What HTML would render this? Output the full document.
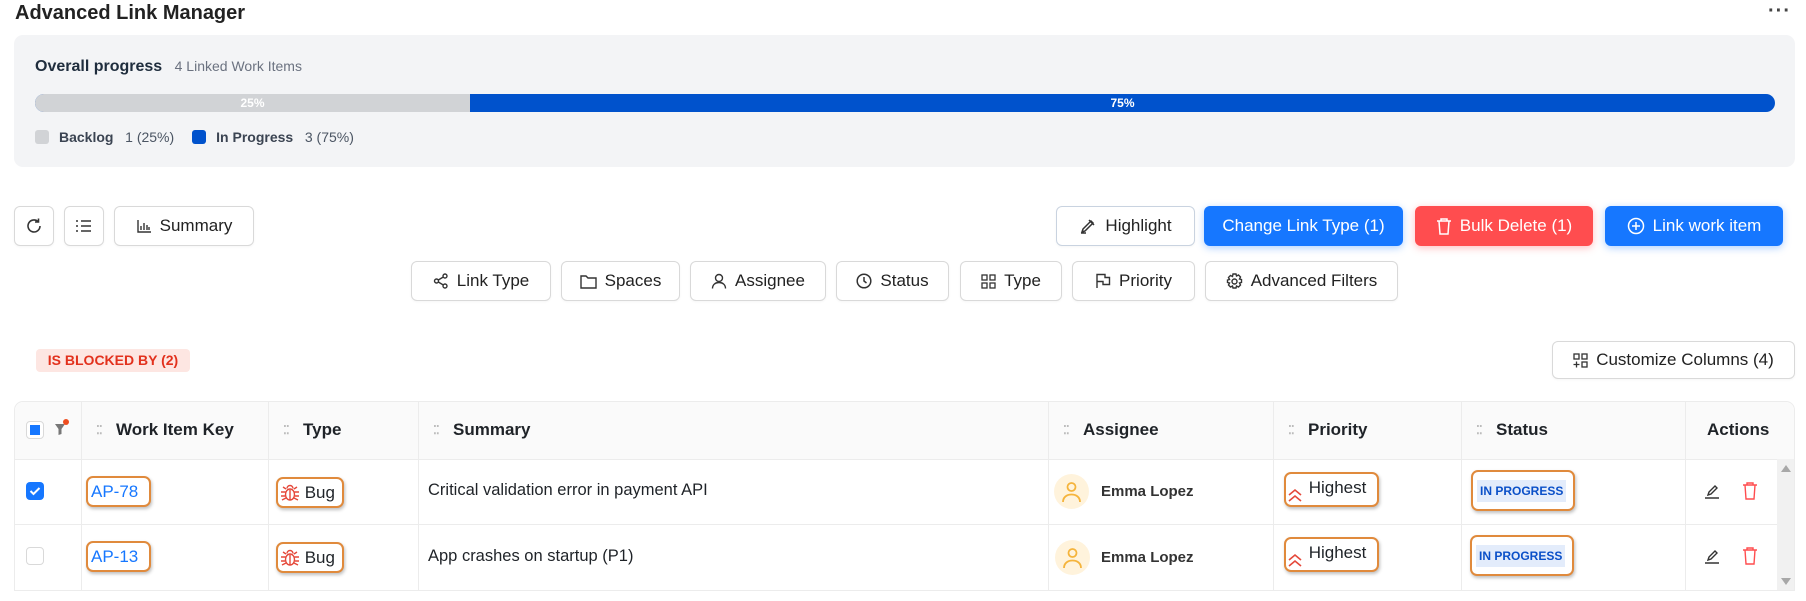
<!DOCTYPE html>
<html><head><meta charset="utf-8"><style>
*{box-sizing:border-box;margin:0;padding:0}
body{width:1806px;height:601px;overflow:hidden;background:#fff;font-family:"Liberation Sans",sans-serif;color:#1f2328;position:relative}
.a{position:absolute}
.btn{position:absolute;display:flex;align-items:center;justify-content:center;gap:8px;border:1px solid #d9d9d9;border-radius:6px;background:#fff;font-size:17px;color:#222;box-shadow:0 1px 2px rgba(0,0,0,.04);white-space:nowrap}
.pb{background:#1677ff;color:#fff;border:none;box-shadow:0 2px 8px rgba(22,119,255,.35)}
.rb{background:#ff4d4f;color:#fff;border:none;box-shadow:0 2px 8px rgba(255,77,79,.35)}
.th{position:absolute;top:401px;height:58px;display:flex;align-items:center;font-weight:bold;font-size:17px;color:#1f2328}
.dots{color:#bbb;font-size:12px;letter-spacing:-1px;margin-right:12px;line-height:6px;width:8px}
.vl{position:absolute;width:1px;background:#ececec}
.hl{position:absolute;height:1px;background:#ececec}
.ob{position:absolute;border:2px solid #e08a3c;border-radius:7px;box-shadow:1px 2px 3px rgba(0,0,0,.25);display:flex;align-items:center;background:#fff;white-space:nowrap}
.ip{background:#e3ecfb;color:#0b50c8;font-weight:bold;font-size:12px;padding:4px 3px;white-space:nowrap}
svg{display:block}
</style></head><body>
<div class="a" style="left:15px;top:2px;font-size:20px;font-weight:bold;color:#222">Advanced Link Manager</div>
<div class="a" style="left:1768px;top:0px;font-size:20px;font-weight:bold;color:#444;letter-spacing:1px">···</div>

<div class="a" style="left:14px;top:35px;width:1781px;height:132px;background:#f3f4f6;border-radius:9px"></div>
<div class="a" style="left:35px;top:58px;font-size:16px;color:#1f2d3d;font-weight:bold">Overall progress <span style="font-weight:normal;color:#6b7280;font-size:14px;margin-left:8px">4 Linked Work Items</span></div>
<div class="a" style="left:35px;top:94px;width:1740px;height:18px;border-radius:9px;background:#0052cc;overflow:hidden">
 <div style="width:435px;height:18px;background:#d1d3d6;color:#fff;font-size:12px;font-weight:bold;text-align:center;line-height:18px">25%</div>
 <div style="position:absolute;left:435px;top:0;width:1305px;text-align:center;color:#fff;font-size:12px;font-weight:bold;line-height:18px">75%</div>
</div>
<div class="a" style="left:35px;top:129px;display:flex;align-items:center;font-size:14px;color:#4b5563">
 <span style="width:14px;height:14px;background:#d1d3d6;border-radius:3px;margin-right:10px"></span><b style="color:#3b4452">Backlog</b>&nbsp;&nbsp; 1 (25%)
 <span style="width:14px;height:14px;background:#0052cc;border-radius:3px;margin:0 10px 0 18px"></span><b style="color:#3b4452">In Progress</b>&nbsp;&nbsp; 3 (75%)
</div>

<div class="btn" style="left:14px;top:206px;width:40px;height:40px"><svg width="18" height="18" viewBox="0 0 18 18" fill="none" stroke="#333" stroke-width="1.6"><path d="M15 9a6 6 0 1 1-2-4.5"/><path d="M13.5 1.5v3.5h-3.5"/></svg></div>
<div class="btn" style="left:64px;top:206px;width:40px;height:40px"><svg width="18" height="18" viewBox="0 0 18 18" stroke="#333" stroke-width="1.5"><path d="M6 4h10M6 9h10M6 14h10M2 3v2M2 8v2M2 13v2"/></svg></div>
<div class="btn" style="left:114px;top:206px;width:140px;height:40px"><svg width="16" height="16" viewBox="0 0 16 16" fill="none" stroke="#333" stroke-width="1.4"><path d="M2 2v12h13M5 12V8M8 12V5M11 12V7M13 12V9"/></svg>Summary</div>

<div class="btn" style="left:1056px;top:206px;width:139px;height:40px;border-color:#c9d3e0"><svg width="18" height="18" viewBox="0 0 18 18" fill="none" stroke="#333" stroke-width="1.5"><path d="M3 15l3-1 8-8-2-2-8 8zM10 3l5 5M2 16h5"/></svg>Highlight</div>
<div class="btn pb" style="left:1204px;top:206px;width:199px;height:40px">Change Link Type (1)</div>
<div class="btn rb" style="left:1415px;top:206px;width:178px;height:40px"><svg width="16" height="18" viewBox="0 0 16 18" fill="none" stroke="#fff" stroke-width="1.5"><path d="M1 4h14M5 4V2h6v2M3 4l1 13h8l1-13"/></svg>Bulk Delete (1)</div>
<div class="btn pb" style="left:1605px;top:206px;width:178px;height:40px"><svg width="18" height="18" viewBox="0 0 18 18" fill="none" stroke="#fff" stroke-width="1.5"><circle cx="9" cy="9" r="7.5"/><path d="M9 5v8M5 9h8"/></svg>Link work item</div>

<div class="btn" style="left:411px;top:261px;width:140px;height:40px"><svg width="16" height="16" viewBox="0 0 16 16" fill="none" stroke="#333" stroke-width="1.4"><circle cx="3.5" cy="8" r="2"/><circle cx="12" cy="3" r="2"/><circle cx="12" cy="13" r="2"/><path d="M5.3 7l5-3M5.3 9l5 3"/></svg>Link Type</div>
<div class="btn" style="left:561px;top:261px;width:119px;height:40px"><svg width="17" height="15" viewBox="0 0 17 15" fill="none" stroke="#333" stroke-width="1.4"><path d="M1 2h5l2 2h8v10H1z"/></svg>Spaces</div>
<div class="btn" style="left:690px;top:261px;width:136px;height:40px"><svg width="16" height="16" viewBox="0 0 16 16" fill="none" stroke="#333" stroke-width="1.4"><circle cx="8" cy="5" r="3.5"/><path d="M1.5 15.5c0-4 3-6 6.5-6s6.5 2 6.5 6"/></svg>Assignee</div>
<div class="btn" style="left:836px;top:261px;width:113px;height:40px"><svg width="16" height="16" viewBox="0 0 16 16" fill="none" stroke="#333" stroke-width="1.5"><circle cx="8" cy="8" r="6.8"/><path d="M8 4v4l2.5 2"/></svg>Status</div>
<div class="btn" style="left:960px;top:261px;width:102px;height:40px"><svg width="15" height="15" viewBox="0 0 15 15" fill="none" stroke="#333" stroke-width="1.3"><rect x="1" y="1" width="5" height="5"/><rect x="9" y="1" width="5" height="5"/><rect x="1" y="9" width="5" height="5"/><rect x="9" y="9" width="5" height="5"/></svg>Type</div>
<div class="btn" style="left:1072px;top:261px;width:123px;height:40px"><svg width="16" height="16" viewBox="0 0 16 16" fill="none" stroke="#333" stroke-width="1.4"><path d="M2 15V1.5h8v3h4.5v7H8v-3H2"/></svg>Priority</div>
<div class="btn" style="left:1205px;top:261px;width:193px;height:40px"><svg width="17" height="17" viewBox="0 0 17 17" fill="none" stroke="#333" stroke-width="1.4"><circle cx="8.5" cy="8.5" r="2.5"/><path d="M7 1h3l.5 2 2-1 2 2-1 2 2 .5v3l-2 .5 1 2-2 2-2-1-.5 2H7l-.5-2-2 1-2-2 1-2-2-.5V7l2-.5-1-2 2-2 2 1z"/></svg>Advanced Filters</div>

<div class="a" style="left:36px;top:349px;width:154px;height:23px;background:#fde6e2;border-radius:4px;color:#e2311d;font-weight:bold;font-size:14px;text-align:center;line-height:23px">IS BLOCKED BY (2)</div>
<div class="btn" style="left:1552px;top:341px;width:243px;height:38px"><svg width="15" height="15" viewBox="0 0 15 15" fill="none" stroke="#333" stroke-width="1.3"><rect x="1" y="1" width="5" height="5"/><rect x="9" y="1" width="5" height="5"/><path d="M3.5 8.5v6M.5 11.5h6"/><rect x="9" y="9" width="5" height="5"/></svg>Customize Columns (4)</div>

<div class="a" style="left:14px;top:401px;width:1781px;height:190px;border:1px solid #ececec;border-radius:9px 9px 0 0"></div>
<div class="a" style="left:15px;top:402px;width:1779px;height:57px;background:#fafafa;border-radius:9px 9px 0 0"></div>
<div class="hl" style="left:14px;top:459px;width:1781px"></div>
<div class="hl" style="left:14px;top:524px;width:1781px"></div>
<div class="vl" style="left:81px;top:401px;height:189px"></div>
<div class="vl" style="left:268px;top:401px;height:189px"></div>
<div class="vl" style="left:418px;top:401px;height:189px"></div>
<div class="vl" style="left:1048px;top:401px;height:189px"></div>
<div class="vl" style="left:1273px;top:401px;height:189px"></div>
<div class="vl" style="left:1461px;top:401px;height:189px"></div>
<div class="vl" style="left:1685px;top:401px;height:189px"></div>
<div class="a" style="left:1777px;top:459px;width:17px;height:131px;background:#f1f1f1"></div>
<div class="a" style="left:1781px;top:465px;width:0;height:0;border:5px solid transparent;border-bottom:7px solid #a8a8a8;border-top:0"></div>
<div class="a" style="left:1781px;top:578px;width:0;height:0;border:5px solid transparent;border-top:7px solid #a8a8a8;border-bottom:0"></div>

<div class="a" style="left:26px;top:421px;width:18px;height:18px;border:1px solid #d9d9d9;border-radius:4px;background:#fff"><div style="margin:3px;width:10px;height:10px;background:#1677ff"></div></div>
<svg class="a" style="left:54px;top:418px" width="16" height="20" viewBox="0 0 16 20"><path d="M1 6h10l-3.5 5v5l-3 1v-6z" fill="#777"/><circle cx="12" cy="4" r="3" fill="#ee4d1f"/></svg>
<div class="th" style="left:96px"><span class="dots">⁚⁚</span>Work Item Key</div>
<div class="th" style="left:283px"><span class="dots">⁚⁚</span>Type</div>
<div class="th" style="left:433px"><span class="dots">⁚⁚</span>Summary</div>
<div class="th" style="left:1063px"><span class="dots">⁚⁚</span>Assignee</div>
<div class="th" style="left:1288px"><span class="dots">⁚⁚</span>Priority</div>
<div class="th" style="left:1476px"><span class="dots">⁚⁚</span>Status</div>
<div class="th" style="left:1707px">Actions</div>

<!-- row1 -->
<div class="a" style="left:26px;top:482px;width:18px;height:18px;background:#1677ff;border-radius:4px"><svg width="18" height="18" viewBox="0 0 18 18" fill="none" stroke="#fff" stroke-width="2"><path d="M4.5 9l3 3 6-6"/></svg></div>
<div class="ob" style="left:86px;top:476px;width:65px;height:31px;color:#1677ff;font-size:17px;padding-left:3px">AP-78</div>
<div class="ob" style="left:276px;top:477px;width:68px;height:31px;font-size:17px;padding-left:2px"><svg width="20" height="18" viewBox="0 0 20 18" fill="none" stroke="#e5483a" stroke-width="1.4"><ellipse cx="10" cy="10.5" rx="4.5" ry="5.5"/><path d="M7 4.5a3 3 0 0 1 6 0M1 8h4.5M14.5 8H19M1 12h4M15 12h4M2 16l4-2M18 16l-4-2M10 6v10M3 3l3 2M17 3l-3 2"/></svg>&nbsp;Bug</div>
<div class="a" style="left:428px;top:481px;font-size:16.5px;color:#1f2328">Critical validation error in payment API</div>
<div class="a" style="left:1054px;top:474px;width:35px;height:35px;border-radius:50%;background:#fff3dc"><svg width="35" height="35" viewBox="0 0 35 35" fill="none" stroke="#f5b43c" stroke-width="1.8"><circle cx="17.5" cy="13" r="4"/><path d="M9 28c0-5 4-7.5 8.5-7.5s8.5 2.5 8.5 7.5"/></svg></div>
<div class="a" style="left:1101px;top:483px;font-size:15px;font-weight:bold;color:#333">Emma Lopez</div>
<div class="ob" style="left:1284px;top:472px;width:95px;height:35px;font-size:17px;align-items:flex-start;padding-top:4px"><svg width="18" height="20" viewBox="0 0 18 20" fill="none" stroke="#e5483a" stroke-width="1.6" style="margin-top:8px"><path d="M3 9l6-5 6 5M3 15l6-5 6 5"/></svg>&nbsp;Highest</div>
<div class="ob" style="left:1471px;top:470px;width:104px;height:41px;padding-left:4px"><span class="ip">IN PROGRESS</span></div>
<svg class="a" style="left:1703px;top:482px" width="18" height="18" viewBox="0 0 18 18" fill="none" stroke="#333" stroke-width="1.4"><path d="M5 13l1-3 6-6 2 2-6 6zM2 16h14"/></svg>
<svg class="a" style="left:1742px;top:481px" width="16" height="19" viewBox="0 0 16 19" fill="none" stroke="#ff4d4f" stroke-width="1.4"><path d="M1 4h14M5 4V2h6v2M3 4l1 14h8l1-14"/></svg>

<!-- row2 -->
<div class="a" style="left:26px;top:547px;width:18px;height:18px;border:1px solid #d9d9d9;border-radius:4px;background:#fff"></div>
<div class="ob" style="left:86px;top:541px;width:65px;height:31px;color:#1677ff;font-size:17px;padding-left:3px">AP-13</div>
<div class="ob" style="left:276px;top:542px;width:68px;height:31px;font-size:17px;padding-left:2px"><svg width="20" height="18" viewBox="0 0 20 18" fill="none" stroke="#e5483a" stroke-width="1.4"><ellipse cx="10" cy="10.5" rx="4.5" ry="5.5"/><path d="M7 4.5a3 3 0 0 1 6 0M1 8h4.5M14.5 8H19M1 12h4M15 12h4M2 16l4-2M18 16l-4-2M10 6v10M3 3l3 2M17 3l-3 2"/></svg>&nbsp;Bug</div>
<div class="a" style="left:428px;top:547px;font-size:16.5px;color:#1f2328">App crashes on startup (P1)</div>
<div class="a" style="left:1055px;top:540px;width:35px;height:35px;border-radius:50%;background:#fff3dc"><svg width="35" height="35" viewBox="0 0 35 35" fill="none" stroke="#f5b43c" stroke-width="1.8"><circle cx="17.5" cy="13" r="4"/><path d="M9 28c0-5 4-7.5 8.5-7.5s8.5 2.5 8.5 7.5"/></svg></div>
<div class="a" style="left:1101px;top:549px;font-size:15px;font-weight:bold;color:#333">Emma Lopez</div>
<div class="ob" style="left:1284px;top:537px;width:95px;height:35px;font-size:17px;align-items:flex-start;padding-top:4px"><svg width="18" height="20" viewBox="0 0 18 20" fill="none" stroke="#e5483a" stroke-width="1.6" style="margin-top:8px"><path d="M3 9l6-5 6 5M3 15l6-5 6 5"/></svg>&nbsp;Highest</div>
<div class="ob" style="left:1470px;top:535px;width:104px;height:41px;padding-left:4px"><span class="ip">IN PROGRESS</span></div>
<svg class="a" style="left:1703px;top:547px" width="18" height="18" viewBox="0 0 18 18" fill="none" stroke="#333" stroke-width="1.4"><path d="M5 13l1-3 6-6 2 2-6 6zM2 16h14"/></svg>
<svg class="a" style="left:1742px;top:546px" width="16" height="19" viewBox="0 0 16 19" fill="none" stroke="#ff4d4f" stroke-width="1.4"><path d="M1 4h14M5 4V2h6v2M3 4l1 14h8l1-14"/></svg>
</body></html>
